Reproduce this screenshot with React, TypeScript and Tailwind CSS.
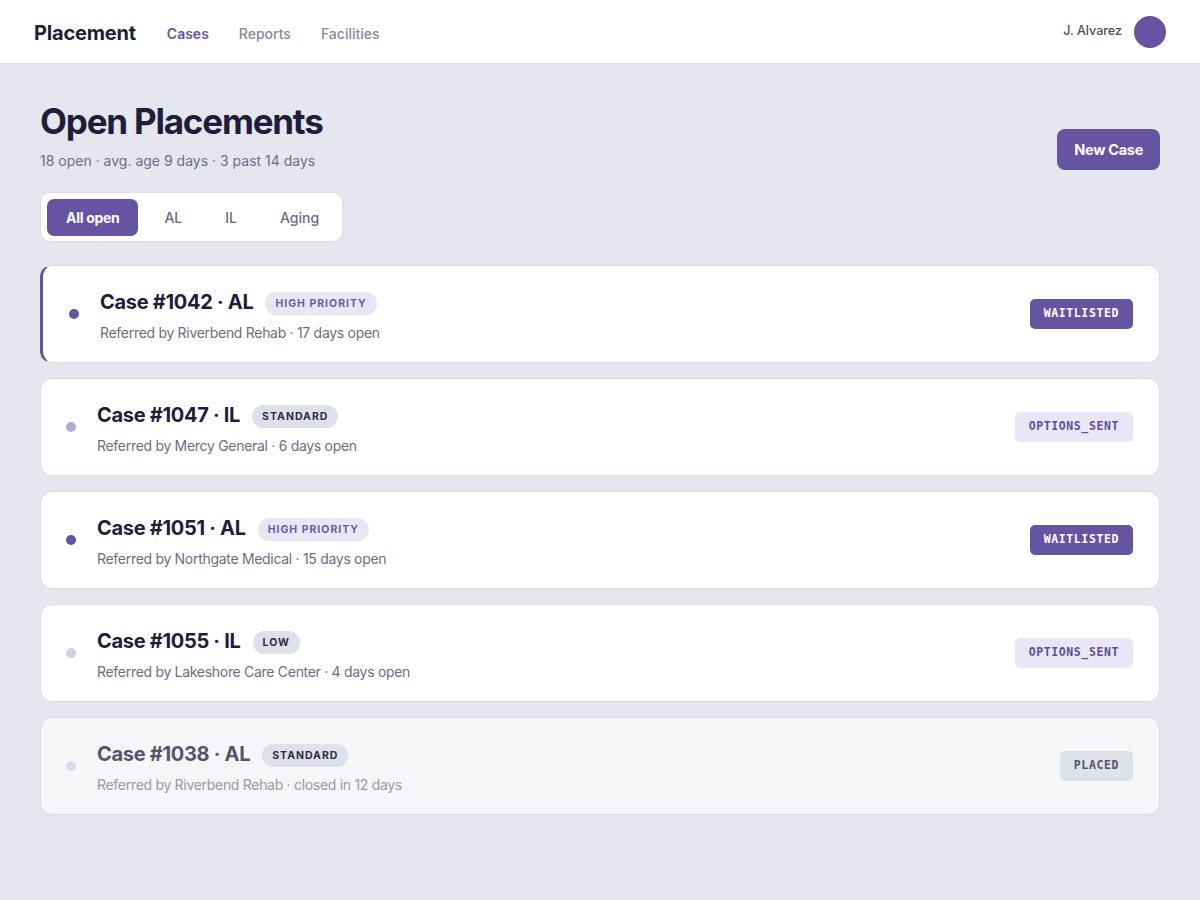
import React from 'react';

type Priority = 'high' | 'standard' | 'low';
type Status = 'WAITLISTED' | 'OPTIONS_SENT' | 'PLACED';

interface CaseItem {
	id: number;
	level: 'AL' | 'IL';
	priority: Priority;
	note: string;
	status: Status;
	dot: string;
	urgent?: boolean;
	closed?: boolean;
}

const cases: CaseItem[] = [
	{ id: 1042, level: 'AL', priority: 'high', note: 'Referred by Riverbend Rehab · 17 days open', status: 'WAITLISTED', dot: 'bg-[#6554a1]', urgent: true },
	{ id: 1047, level: 'IL', priority: 'standard', note: 'Referred by Mercy General · 6 days open', status: 'OPTIONS_SENT', dot: 'bg-[#b3aad6]' },
	{ id: 1051, level: 'AL', priority: 'high', note: 'Referred by Northgate Medical · 15 days open', status: 'WAITLISTED', dot: 'bg-[#6554a1]' },
	{ id: 1055, level: 'IL', priority: 'low', note: 'Referred by Lakeshore Care Center · 4 days open', status: 'OPTIONS_SENT', dot: 'bg-[#d2cee6]' },
	{ id: 1038, level: 'AL', priority: 'standard', note: 'Referred by Riverbend Rehab · closed in 12 days', status: 'PLACED', dot: 'bg-[#dcdce8]', closed: true }
];

const priorityLabel: Record<Priority, string> = {
	high: 'HIGH PRIORITY',
	standard: 'STANDARD',
	low: 'LOW'
};

const priorityClass: Record<Priority, string> = {
	high: 'bg-[#e9e6f6] text-[#6a5aa6]',
	standard: 'bg-[#dfe1ea] text-[#2c2b42]',
	low: 'bg-[#dfe1ea] text-[#2c2b42]'
};

const statusClass: Record<Status, string> = {
	WAITLISTED: 'bg-[#6554a1] text-white',
	OPTIONS_SENT: 'bg-[#e9e7f7] text-[#5c4f96]',
	PLACED: 'bg-[#e0e2ea] text-[#54536a]'
};

function Header() {
	return (
		<header className="h-16 bg-white border-b border-[#dcdce6] flex items-center justify-between pl-[34px] pr-[34px] pt-[3px]">
			<div className="flex items-center">
				<span className="text-[20px] font-bold text-[#1f1d3a] tracking-[-0.2px]">Placement</span>
				<nav className="flex items-center gap-[30px] ml-[31px] text-[14px] font-medium">
					<span className="text-[#6554a1] font-semibold">Cases</span>
					<span className="text-[#8a8998]">Reports</span>
					<span className="text-[#8a8998]">Facilities</span>
				</nav>
			</div>
			<div className="flex items-center gap-3 -mt-[3px]">
				<span className="text-[12.5px] font-medium text-[#4e4d60]">J. Alvarez</span>
				<div className="w-8 h-8 rounded-full bg-[#6554a1]" />
			</div>
		</header>
	);
}

function Tabs() {
	const tabs = ['All open', 'AL', 'IL', 'Aging'];
	return (
		<div className="inline-flex items-center gap-[9px] bg-white border border-[#dcdce6] rounded-[10px] p-[6px] h-[50px]">
			{tabs.map((t, i) =>
				i === 0 ? (
					<span key={t} className="h-[37px] px-[19px] flex items-center rounded-[7px] bg-[#6554a1] text-white text-[14px] font-bold tracking-[-0.3px]">
						{t}
					</span>
				) : (
					<span key={t} className="h-[37px] px-[17px] flex items-center text-[14px] font-medium text-[#6b6a7d]">
						{t}
					</span>
				)
			)}
		</div>
	);
}

function CaseCard({ item }: { item: CaseItem }) {
	return (
		<div
			className={
				'flex items-center justify-between rounded-xl border border-[#dcdce6] h-[98px] pr-[26px] ' +
				(item.closed ? 'bg-[#f6f6f9] ' : 'bg-white ') +
				(item.urgent ? 'border-l-[3px] border-l-[#6554a1] pl-[26px]' : 'pl-[25px]')
			}
		>
			<div className="flex items-center gap-[21px]">
				<div className={'w-[10px] h-[10px] rounded-full ' + item.dot} />
				<div className="flex flex-col gap-[5px] pt-[2px]">
					<div className="flex items-center gap-[12px]">
						<span className={'text-[20px] font-bold tracking-[-0.3px] ' + (item.closed ? 'text-[#55546b]' : 'text-[#1f1d3a]')}>
							Case #{item.id} · {item.level}
						</span>
						<span className={'h-[23px] px-[10px] mt-[3px] rounded-full flex items-center text-[10.5px] font-bold tracking-[1px] ' + priorityClass[item.priority]}>
							{priorityLabel[item.priority]}
						</span>
					</div>
					<span className={'text-[14px] tracking-[-0.3px] ' + (item.closed ? 'text-[#9897a6]' : 'text-[#6e6d80]')}>{item.note}</span>
				</div>
			</div>
			<span
				className={'h-[30px] px-[14px] rounded-[5px] flex items-center text-[11.5px] font-bold tracking-[0.6px] ' + statusClass[item.status]}
				style={{ fontFamily: '"DejaVu Sans Mono", "Liberation Mono", monospace' }}
			>
				{item.status}
			</span>
		</div>
	);
}

export default function App() {
	return (
		<div className="min-h-[900px] bg-[#e6e6ef]" style={{ fontFamily: 'Inter, "Noto Sans", sans-serif' }}>
			<Header />
			<main className="px-10 pt-[36px]">
				<div className="flex items-end justify-between">
					<div>
						<h1 className="text-[35px] font-bold text-[#1f1d3a] tracking-[-1.2px] leading-[42px]">Open Placements</h1>
						<p className="mt-[8px] text-[14px] text-[#6e6d80]">18 open · avg. age 9 days · 3 past 14 days</p>
					</div>
					<button className="h-[41px] px-[17px] mb-[1px] rounded-lg bg-[#6554a1] text-white text-[14.5px] font-bold tracking-[-0.3px]">
						New Case
					</button>
				</div>
				<div className="mt-[21px]">
					<Tabs />
				</div>
				<div className="mt-[23px] flex flex-col gap-[15px]">
					{cases.map((c) => (
						<CaseCard key={c.id} item={c} />
					))}
				</div>
			</main>
		</div>
	);
}
